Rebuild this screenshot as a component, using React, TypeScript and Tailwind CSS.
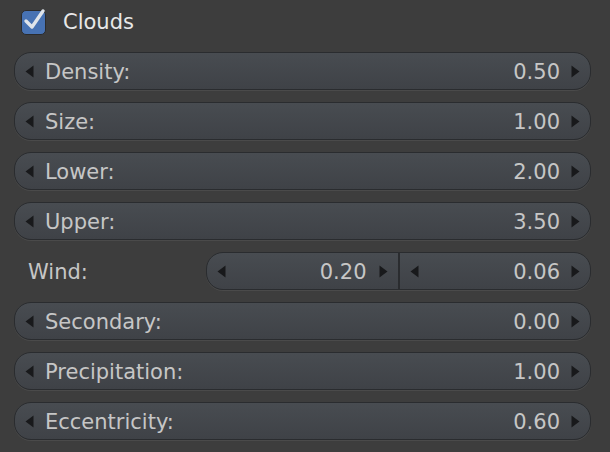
import React from "react";

const font = { fontFamily: '"DejaVu Sans", sans-serif' };

function ArrowL() {
  return (
    <svg width="9" height="13" viewBox="0 0 9 13" className="shrink-0">
      <path d="M8.5 0.5 L0.5 6.5 L8.5 12.5 Z" fill="#18191b" />
    </svg>
  );
}

function ArrowR() {
  return (
    <svg width="9" height="13" viewBox="0 0 9 13" className="shrink-0">
      <path d="M0.5 0.5 L8.5 6.5 L0.5 12.5 Z" fill="#18191b" />
    </svg>
  );
}

function Field({ label, value }: { label: string; value: string }) {
  return (
    <div className="ml-[14px] mr-[19px] flex h-[38px] items-center rounded-[17px] border border-[#2a2c2f] bg-gradient-to-b from-[#484c51] to-[#3f4247] pl-[10px] pr-[10px] shadow-[0_1px_0_#4a4a4a]">
      <ArrowL />
      <span className="ml-[11px] flex-1 pt-[3px] text-[21px] text-[#c6c6c6]">{label}</span>
      <span className="mr-[11px] pt-[3px] text-[21px] text-[#c6c6c6]">{value}</span>
      <ArrowR />
    </div>
  );
}

export default function App() {
  const rows: [string, string][] = [
    ["Density:", "0.50"],
    ["Size:", "1.00"],
    ["Lower:", "2.00"],
    ["Upper:", "3.50"],
  ];
  const rows2: [string, string][] = [
    ["Secondary:", "0.00"],
    ["Precipitation:", "1.00"],
    ["Eccentricity:", "0.60"],
  ];
  return (
    <div className="h-[452px] w-[610px] overflow-hidden bg-[#3d3d3d]" style={font}>
      <div className="flex h-[44px] items-center pl-[21px]">
        <div className="relative h-[25px] w-[25px] rounded-[5px] border border-[#2b2b2b] bg-[#4772b3]">
          <svg width="30" height="30" viewBox="0 0 30 30" className="absolute left-[-1px] top-[-7px]">
            <path d="M5 17 L11 23 L22 7" stroke="#dfe4ea" strokeWidth="3.4" fill="none" strokeLinecap="round" strokeLinejoin="round" />
          </svg>
        </div>
        <span className="ml-[17px] pt-[2px] text-[21px] text-[#e8e8e8]">Clouds</span>
      </div>
      <div className="flex flex-col gap-[12px] pt-[8px]">
        {rows.map(([l, v]) => (
          <Field key={l} label={l} value={v} />
        ))}
        <div className="flex h-[38px] items-center">
          <span className="ml-[28px] w-[178px] pt-[3px] text-[21px] text-[#c6c6c6]">Wind:</span>
          <div className="mr-[19px] flex h-[38px] flex-1 rounded-[17px] border border-[#2a2c2f] bg-gradient-to-b from-[#484c51] to-[#3f4247] shadow-[0_1px_0_#4a4a4a]">
            <div className="flex flex-1 items-center border-r-2 border-[#2a2c2f] pl-[10px] pr-[10px]">
              <ArrowL />
              <span className="mr-[12px] flex-1 pt-[3px] text-right text-[21px] text-[#c6c6c6]">0.20</span>
              <ArrowR />
            </div>
            <div className="flex flex-1 items-center pl-[10px] pr-[10px]">
              <ArrowL />
              <span className="mr-[11px] flex-1 pt-[3px] text-right text-[21px] text-[#c6c6c6]">0.06</span>
              <ArrowR />
            </div>
          </div>
        </div>
        {rows2.map(([l, v]) => (
          <Field key={l} label={l} value={v} />
        ))}
      </div>
    </div>
  );
}
